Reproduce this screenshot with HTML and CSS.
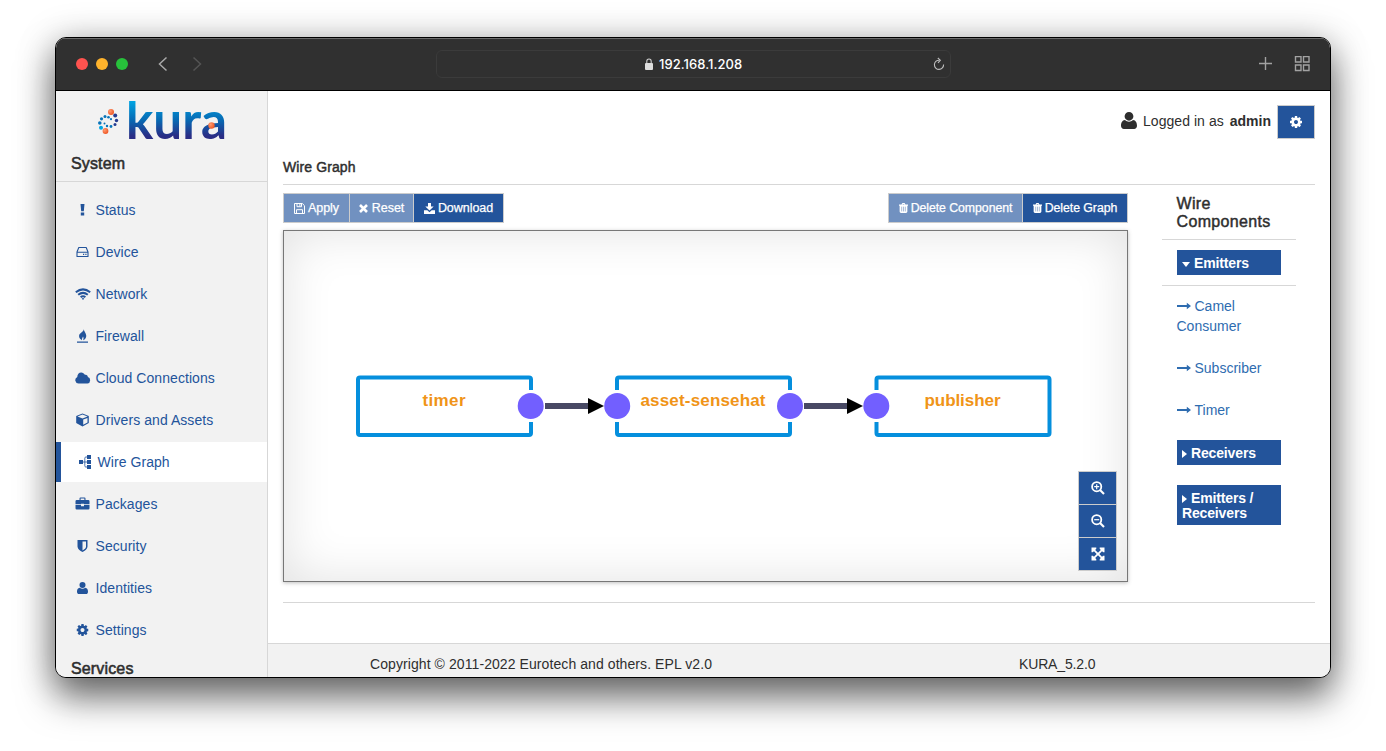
FILE: index.html
```html
<!DOCTYPE html>
<html lang="en">
<head>
<meta charset="utf-8">
<title>Kura - Wire Graph</title>
<link rel="stylesheet" href="styles.css">
</head>
<body>
<svg class="defs" aria-hidden="true">
  <symbol id="cog" viewBox="128 128 1536 1536"><path d="M1152 896q0-106-75-181t-181-75-181 75-75 181 75 181 181 75 181-75 75-181zm512-109v222q0 12-8 23t-20 13l-185 28q-19 54-39 91 35 50 107 138 10 12 10 25t-9 23q-27 37-99 108t-94 71q-12 0-26-9l-138-108q-44 23-91 38-16 136-29 186-7 28-36 28h-222q-14 0-24.500-8.500t-11.500-21.500l-28-184q-49-16-90-37l-141 107q-10 9-25 9-14 0-25-11-126-114-165-168-7-10-7-23 0-12 8-23 15-21 51-66.500t54-70.500q-27-50-41-99l-183-27q-13-2-21-12.500t-8-23.500v-222q0-12 8-23t19-13l186-28q14-46 39-92-40-57-107-138-10-12-10-24 0-10 9-23 26-36 98.500-107.500t94.500-71.500q13 0 26 10l138 107q44-23 91-38 16-136 29-186 7-28 36-28h222q14 0 24.500 8.500t11.500 21.500l28 184q49 16 90 37l142-107q9-9 24-9 13 0 25 10 129 119 165 170 7 8 7 22 0 12-8 23-15 21-51 66.500t-54 70.500q26 50 41 98l183 28q13 2 21 12.500t8 23.500z"/></symbol>
  <symbol id="user" viewBox="0 0 12 13"><path d="M6 0a3.300 3.300 0 0 1 3.300 3.300A3.300 3.300 0 0 1 6 6.600 3.300 3.300 0 0 1 2.700 3.300 3.300 3.300 0 0 1 6 0zM3 6.200C3.900 7 4.900 7.400 6 7.400s2.100-.4 3-1.200C11.200 6.400 12 8.500 12 10.500c0 1.500-.9 2.500-2.200 2.500H2.200C.9 13 0 12 0 10.500 0 8.500.8 6.400 3 6.200z"/></symbol>
  <symbol id="trash" viewBox="0 0 10 11"><path fill-rule="evenodd" d="M3 1.200C3.200.4 3.600 0 4.300 0h1.400C6.400 0 6.800.4 7 1.200L7.200 1.500H10V3H9.300v6.400c0 .9-.7 1.600-1.500 1.600H2.200C1.400 11 .7 10.300.7 9.400V3H0V1.500h2.800zM4 1.500h2L5.700 1H4.300z"/><path d="M3 4v5.300M5 4v5.300M7 4v5.300" stroke="#23549b" stroke-opacity=".55" stroke-width=".8"/></symbol>
  <symbol id="arrow" viewBox="0 0 14 8"><path d="M0 3h9.800V.8L14 4 9.800 7.200V5H0z"/></symbol>
</svg>

<div class="window">
  <div class="titlebar">
    <div class="lights"><i class="red"></i><i class="yellow"></i><i class="green"></i></div>
    <svg class="chevrons" width="46" height="16" viewBox="0 0 46 16"><path d="M9.500 1.500 2.500 8l7 6.500" stroke="#a9a9a9"/><path d="m36.500 1.500 7 6.500-7 6.500" stroke="#545454"/></svg>
    <div class="address">
      <svg width="8" height="12" viewBox="0 0 8 12"><rect y="5" width="8" height="7" rx="1" fill="#ddd"/><path d="M1.800 5V3.200a2.200 2.200 0 0 1 4.400 0V5" fill="none" stroke="#ccc" stroke-width="1.100"/></svg>
      <span>192.168.1.208</span>
      <svg class="reload" width="12" height="14" viewBox="0 0 12 14"><path d="M6.200 3.200A4.600 4.600 0 1 0 10.600 7.600M4.800 1l2.500 2.300-2.300 2.500" fill="none" stroke="#bdbdbd" stroke-width="1.100"/></svg>
    </div>
    <svg class="tools" width="52" height="16" viewBox="0 0 52 16"><path d="M7.500 1v13M1 7.500h13M37.500.5h5.500v5.500h-5.500zM45.500.5H51v5.500h-5.500zM37.500 9H43v5.500h-5.500zM45.500 9H51v5.500h-5.500z" fill="none" stroke="#a2a2a2" stroke-width="1.400"/></svg>
  </div>

  <div class="page">
    <aside class="sidebar">
      <svg class="logo" width="130" height="44" viewBox="0 0 130 44">
        <defs>
          <linearGradient id="brand" gradientUnits="userSpaceOnUse" x1="0" y1="3" x2="0" y2="42"><stop offset="0" stop-color="#00a5e3"/><stop offset=".5" stop-color="#0868b2"/><stop offset=".9" stop-color="#2a2d85"/></linearGradient>
          <radialGradient id="ball" cx=".35" cy=".35" r=".7"><stop offset="0" stop-color="#ff9a70"/><stop offset="1" stop-color="#ee5522"/></radialGradient>
        </defs>
        <text class="wordmark" x="29" y="41" textLength="101" lengthAdjust="spacingAndGlyphs" fill="url(#brand)">kura</text>
        <circle cx="114.500" cy="27.500" r="3.200" fill="url(#ball)"/>
        <circle cx="14" cy="14" r="3" fill="url(#ball)"/><circle cx="8.500" cy="33" r="2.900" fill="url(#ball)"/>
        <g fill="#243b91"><circle cx="18.200" cy="17.500" r="2"/><circle cx="19.500" cy="22.500" r="1.700"/><circle cx="18" cy="26.500" r="1.500"/></g>
        <g fill="#0874b9"><circle cx="14" cy="28.500" r="1.400"/><circle cx="10" cy="28" r="1.200"/><circle cx="7.500" cy="25.500" r="1"/><circle cx="14" cy="21.200" r="1.100"/><circle cx="11.500" cy="19.200" r="1.300"/><circle cx="8" cy="18.500" r="1.500"/><circle cx="4.500" cy="20.800" r="1.600"/><circle cx="2.800" cy="25" r="1.800"/></g>
        <circle cx="4" cy="29.800" r="2" fill="#00a5e3"/>
      </svg>
      <h2 class="section">System</h2>
      <nav>
        <a><svg viewBox="0 0 14 14"><path d="M5 1h4l-.7 7.200H5.700zM5.300 9.400h3.400v3H5.300z"/></svg>Status</a>
        <a><svg viewBox="0 0 14 14"><path d="M3.300 2.500h7.400L12.500 7v4.500h-11V7zM1.400 7.200h11" fill="none" stroke="currentColor" stroke-width="1.100" stroke-linejoin="round"/><path d="M7.500 8.800h1.200V10H7.500zM9.800 8.800H11V10H9.800z"/></svg>Device</a>
        <a><svg class="wide" viewBox="0 0 16 14"><g fill="none" stroke="currentColor" stroke-width="2"><path d="M.8 5.200q7.200-5.600 14.400 0M3.200 7.700q4.800-3.700 9.600 0M5.600 10.100q2.400-1.800 4.800 0"/></g><path d="M6.700 11.500q1.300-.8 2.600 0L8 12.900z"/></svg>Network</a>
        <a><svg viewBox="0 0 14 14"><path d="M8.200 0c.5 2.500-4.200 3.800-4.600 6.500-.3 2 .9 3.700 2.900 4.700-.4-1.400.8-2.600 1-3.700.7.800.6 2.600.1 3.700 2.200-.9 3.500-2.900 3.100-5C10.300 3.700 8.400 2.300 8.200 0zM1.500 12.500h11v1.200h-11z"/></svg>Firewall</a>
        <a><svg class="wide" viewBox="0 0 16 14"><path d="M3.500 12.500A3.400 3.400 0 0 1 2.300 6C2.200 3.600 3.800 1.500 6.200 1.500c1.700 0 3 1 3.700 2.300 1.500-.6 3 .5 2.900 2.300a3.300 3.300 0 0 1-.3 6.400z"/></svg>Cloud Connections</a>
        <a><svg viewBox="0 0 14 14"><path fill-rule="evenodd" d="M7 .5 13.300 3v7L7 13.500.7 10V3zM2 3.500l5 1.900 5-1.900-5-1.900zM7.700 6.500v5.300L12 9.400V4.900z"/></svg>Drivers and Assets</a>
        <a class="active"><svg viewBox="0 0 14 14"><path d="M1.500 5h4v4h-4zM9.500 0h4v4h-4zM9.500 5h4v4h-4zM9.500 10h4v4h-4z"/><path d="M5 7h5M10 2H8.300Q7.300 2 7.300 3.200v7.600Q7.300 12 8.300 12H10" fill="none" stroke="currentColor" stroke-width=".8"/></svg>Wire Graph</a>
        <a><svg viewBox="0 0 14 14"><path fill-rule="evenodd" d="M4 3V1.600Q4 .5 5 .5h4q1 0 1 1.100V3h2.800q1.200 0 1.200 1.200v3.100H8.500v-.6h-3v.6H0V4.200Q0 3 1.200 3zm1.100 0h3.800V1.600H5.100zM0 8h5.500v1.200h3V8H14v3.300q0 1.200-1.200 1.200H1.200Q0 12.500 0 11.300z"/></svg>Packages</a>
        <a><svg viewBox="0 0 14 14"><path fill-rule="evenodd" d="M2 1h10v6.500c0 2.500-2.500 4.400-5 5.500-2.500-1.100-5-3-5-5.500zm5 1.500v8.900c2-1 3.500-2.300 3.500-3.900v-5z"/></svg>Security</a>
        <a><svg viewBox="0 0 14 14"><use href="#user" x="1.500" y="1" width="11" height="12"/></svg>Identities</a>
        <a><svg viewBox="0 0 14 14"><use href="#cog" x="1" y="1" width="12" height="12"/></svg>Settings</a>
      </nav>
      <h2 class="section services">Services</h2>
    </aside>

    <div class="content">
      <header class="userbar">
        <svg width="16" height="17" viewBox="0 0 12 13" preserveAspectRatio="none"><use href="#user" width="12" height="13"/></svg>
        <span class="login">Logged in as</span><b>admin</b>
        <button class="btn gear"><svg width="12" height="12"><use href="#cog"/></svg></button>
      </header>
      <main>
        <h1>Wire Graph</h1>
        <div class="workspace">
          <section class="editor">
            <div class="toolbar">
              <div class="group">
                <button class="btn off"><svg width="11" height="11" viewBox="0 0 11 11"><path d="M.5.5h7.800l2.200 2.200v7.800H.5zM3 .5v3.200h4.500V.5M5.900 1v2.200M2.500 10.500V6.700h6v3.800" fill="none" stroke="currentColor"/></svg>Apply</button>
                <button class="btn off reset"><svg width="9" height="9" viewBox="0 0 9 9"><path d="m1 1 7 7M8 1 1 8" stroke="currentColor" stroke-width="2.600"/></svg>Reset</button>
                <button class="btn download"><svg width="11" height="11" viewBox="0 0 11 11"><path d="M4 0h3v3.500h2.700L5.500 7.600 1.300 3.500H4zM0 7.200h3.300l2.200 2 2.200-2H11V11H0z"/></svg>Download</button>
              </div>
              <div class="group">
                <button class="btn off"><svg width="9" height="10"><use href="#trash"/></svg>Delete Component</button>
                <button class="btn"><svg width="9" height="10"><use href="#trash"/></svg>Delete Graph</button>
              </div>
            </div>
            <div class="canvas">
              <svg class="graph" width="843" height="350" viewBox="284 231 843 350">
                <g fill="none" stroke="#058fdd" stroke-width="4"><rect x="358" y="377.500" width="173" height="57.500" rx="2"/><rect x="617" y="377.500" width="173" height="57.500" rx="2"/><rect x="876.500" y="377.500" width="173" height="57.500" rx="2"/></g>
                <g fill="#fff"><path d="M515 390h31v32h-31zM601 390h32v32h-32zM774 390h32v32h-32zM861 390h32v32h-32z"/></g>
                <g fill="#484964"><path d="M545 403h44v6h-44zM804 403h44v6h-44z"/></g>
                <path fill="#000" d="m588 398 16 8-16 8zM847 398l16 8-16 8z"/>
                <g fill="#725fff"><circle cx="530.700" cy="406" r="13"/><circle cx="617.200" cy="406" r="13"/><circle cx="790" cy="406" r="13"/><circle cx="876.300" cy="406" r="13"/></g>
                <g class="labels"><text x="444" y="406" textLength="43">timer</text><text x="703" y="406" textLength="125">asset-sensehat</text><text x="962.500" y="406" textLength="76">publisher</text></g>
              </svg>
              <div class="zoom">
                <button class="btn"><svg width="14" height="14" viewBox="0 0 14 14"><g fill="none" stroke="currentColor"><circle cx="5.700" cy="5.700" r="4.600" stroke-width="1.800"/><path d="m9 9 4 4" stroke-width="2.200"/><path d="M3.200 5.700h5M5.700 3.200v5" stroke-width="1.200"/></g></svg></button>
                <button class="btn"><svg width="14" height="14" viewBox="0 0 14 14"><g fill="none" stroke="currentColor"><circle cx="5.700" cy="5.700" r="4.600" stroke-width="1.800"/><path d="m9 9 4 4" stroke-width="2.200"/><path d="M3.200 5.700h5" stroke-width="1.200"/></g></svg></button>
                <button class="btn"><svg width="14" height="14" viewBox="0 0 14 14"><path d="M.5.500h4.800v1.200L4.200 3 7 5.700 9.800 3 8.700 1.700V.5h4.800v4.800h-1.200L11 4.200 8.300 7l2.700 2.800 1.300-1.100h1.200v4.800H8.700v-1.200L9.800 11 7 8.300 4.200 11l1.100 1.300v1.200H.5V8.700h1.200L3 9.800 5.700 7 3 4.200 1.700 5.300H.5z"/></svg></button>
              </div>
            </div>
          </section>
          <aside class="components">
            <h3>Wire Components</h3>
            <div class="category open"><h4><i class="down"></i>Emitters</h4></div>
            <ul>
              <li><svg width="14" height="8"><use href="#arrow"/></svg>Camel Consumer</li>
              <li><svg width="14" height="8"><use href="#arrow"/></svg>Subscriber</li>
              <li><svg width="14" height="8"><use href="#arrow"/></svg>Timer</li>
            </ul>
            <div class="category"><h4><i class="right"></i>Receivers</h4></div>
            <div class="category"><h4><i class="right"></i>Emitters / Receivers</h4></div>
          </aside>
        </div>
      </main>
      <footer><span class="copy">Copyright © 2011-2022 Eurotech and others. EPL v2.0</span><span class="version">KURA_5.2.0</span></footer>
    </div>
  </div>
</div>
</body>
</html>
```
FILE: styles.css
```css
* { box-sizing: border-box; }
body {
  margin: 0;
  height: 751px;
  padding: 37px 55px 0;
  overflow: hidden;
  background: #fff;
  color: #2e2e2e;
  font: 14px/20px "Liberation Sans", Arial, sans-serif;
}
h1, h2, h3, h4, ul { margin: 0; padding: 0; }
svg { fill: currentColor; flex: none; }
.defs { position: absolute; width: 0; height: 0; }

.window {
  width: 1276px;
  height: 641px;
  border: 1px solid #000;
  border-radius: 11px;
  overflow: hidden;
  background: #fff;
  box-shadow: 0 20px 36px rgba(0,0,0,.52), 0 3px 36px rgba(0,0,0,.26);
}
.titlebar {
  display: flex;
  align-items: center;
  height: 53px;
  padding: 0 20px;
  background: #303030;
  border-bottom: 1px solid #000;
  box-shadow: inset 0 1px #6b6b6b;
}
.lights { display: flex; gap: 8px; }
.lights i { width: 12px; height: 12px; border-radius: 50%; }
.red { background: #ff534f; }
.yellow { background: #ffb32c; }
.green { background: #27c13b; }
.chevrons { margin-left: 29px; fill: none; stroke-width: 1.5; }
.address {
  display: flex;
  align-items: center;
  width: 515px;
  height: 28px;
  margin-left: 233px;
  padding: 0 5px 0 208px;
  border: 1px solid #3b3b3b;
  border-radius: 6px;
  color: #fff;
  font: 500 13px Inter, sans-serif;
}
.address span { margin-left: 6px; width: 86px; letter-spacing: .05px; white-space: nowrap; }
.reload { margin-left: auto; }
.tools { margin-left: auto; }

.page { display: flex; height: 586px; }
.sidebar {
  width: 212px;
  flex: none;
  overflow: hidden;
  background: #f2f2f2;
  border-right: 1px solid #d7d7d7;
}
.logo { display: block; margin: 7px 0 0 41px; overflow: visible; }
.wordmark { font: 700 52px Lato, sans-serif; }
.section {
  height: 40px;
  padding: 13px 15px 0;
  border-bottom: 1px solid #d7d7d7;
  font-size: 16px;
  font-weight: 400;
  letter-spacing: .15px;
  line-height: 18px;
  -webkit-text-stroke: .55px currentColor;
}
.sidebar nav { display: flex; flex-direction: column; gap: 2px; padding-top: 8px; }
.sidebar nav a {
  display: flex;
  align-items: center;
  height: 40px;
  padding-left: 19px;
  color: #23549b;
  letter-spacing: .06px;
}
.sidebar nav svg { width: 15px; height: 14px; margin: 0 5.500px 0 0; }
.sidebar nav svg.wide { width: 16px; margin-right: 4.500px; }
.sidebar nav .active { border-left: 5px solid #23549b; padding-left: 16px; background: #fff; }
.services { padding-top: 10px; border: 0; }

.content { display: flex; flex-direction: column; flex: 1; }
.userbar {
  display: flex;
  align-items: center;
  justify-content: flex-end;
  height: 61px;
  padding-right: 15px;
}
.userbar > svg, .login, .userbar b { position: relative; top: -1px; }
.login { margin: 0 6px; letter-spacing: .05px; }
.userbar b { margin-right: 6px; }
.btn {
  display: flex;
  align-items: center;
  justify-content: center;
  margin: 0;
  border: 1px solid #ccc;
  color: #fff;
  background: #23549b;
  font: 12.5px "Liberation Sans", Arial, sans-serif;
  letter-spacing: -.05px;
  -webkit-text-stroke: .25px currentColor;
}
.gear { width: 38px; height: 34px; padding: 0; }
main { flex: 1; padding: 0 15px; }
h1 {
  height: 33px;
  padding-top: 5px;
  border-bottom: 1px solid #d7d7d7;
  font-size: 14px;
  font-weight: 400;
  letter-spacing: .1px;
  -webkit-text-stroke: .45px currentColor;
}
.workspace { display: flex; height: 418px; padding-top: 8px; border-bottom: 1px solid #d7d7d7; }
.editor { width: 845px; }
.toolbar { display: flex; justify-content: space-between; }
.group { display: flex; }
.group .btn { height: 30px; padding: 0; margin-right: -1px; white-space: nowrap; gap: 3px; width: 67px; }
.group .reset { width: 65px; gap: 4px; }
.group .download { width: 91px; }
.group + .group .btn { width: 106px; font-size: 12.3px; }
.group + .group .off { width: 135px; }
.group .btn:last-child { margin-right: 0; }
.btn.off { background: #7191c0; }
.canvas {
  position: relative;
  height: 352px;
  margin-top: 7px;
  border: 1px solid #777;
  box-shadow: inset 0 0 50px rgba(0,0,0,.12), 0 1px 4px rgba(0,0,0,.25);
}
.graph { display: block; }
.labels { fill: #f09418; font-size: 17px; font-weight: 700; text-anchor: middle; }
.zoom { position: absolute; right: 10px; bottom: 10px; }
.zoom .btn { width: 39px; height: 34px; padding: 0; margin-bottom: -1px; }
.zoom .btn:last-child { margin-bottom: 0; }

.components { width: 134px; margin-left: 34px; }
h3 {
  height: 47px;
  padding: 2px 14.500px 0;
  border-bottom: 1px solid #d7d7d7;
  font-size: 16px;
  font-weight: 400;
  letter-spacing: .35px;
  line-height: 17.500px;
  -webkit-text-stroke: .45px currentColor;
}
.category { padding: 10px 15px; }
.open { height: 46px; border-bottom: 1px solid #d7d7d7; }
h4 { padding: 6px 5px 4px; background: #23549b; color: #fff; font-size: 14px; line-height: 15px; letter-spacing: -.15px; }
h4 i { display: inline-block; vertical-align: middle; margin-right: 4px; }
.down { border: 4.500px solid transparent; border-top: 5px solid #fff; border-bottom: 0; }
.right { border: 4.500px solid transparent; border-left: 5px solid #fff; border-right: 0; }
.components ul { list-style: none; }
.components li { padding: 10px 14.500px 12px; color: #2e6cb0; }
.components li:last-child { padding-bottom: 10px; }
.components li svg { margin-right: 4px; vertical-align: 1px; }
footer { display: flex; height: 34px; background: #f2f2f2; border-top: 1px solid #d7d7d7; line-height: 40px; padding-left: 102px; }
.copy { width: 649px; letter-spacing: .08px; }
.version { letter-spacing: -.15px; }
```
